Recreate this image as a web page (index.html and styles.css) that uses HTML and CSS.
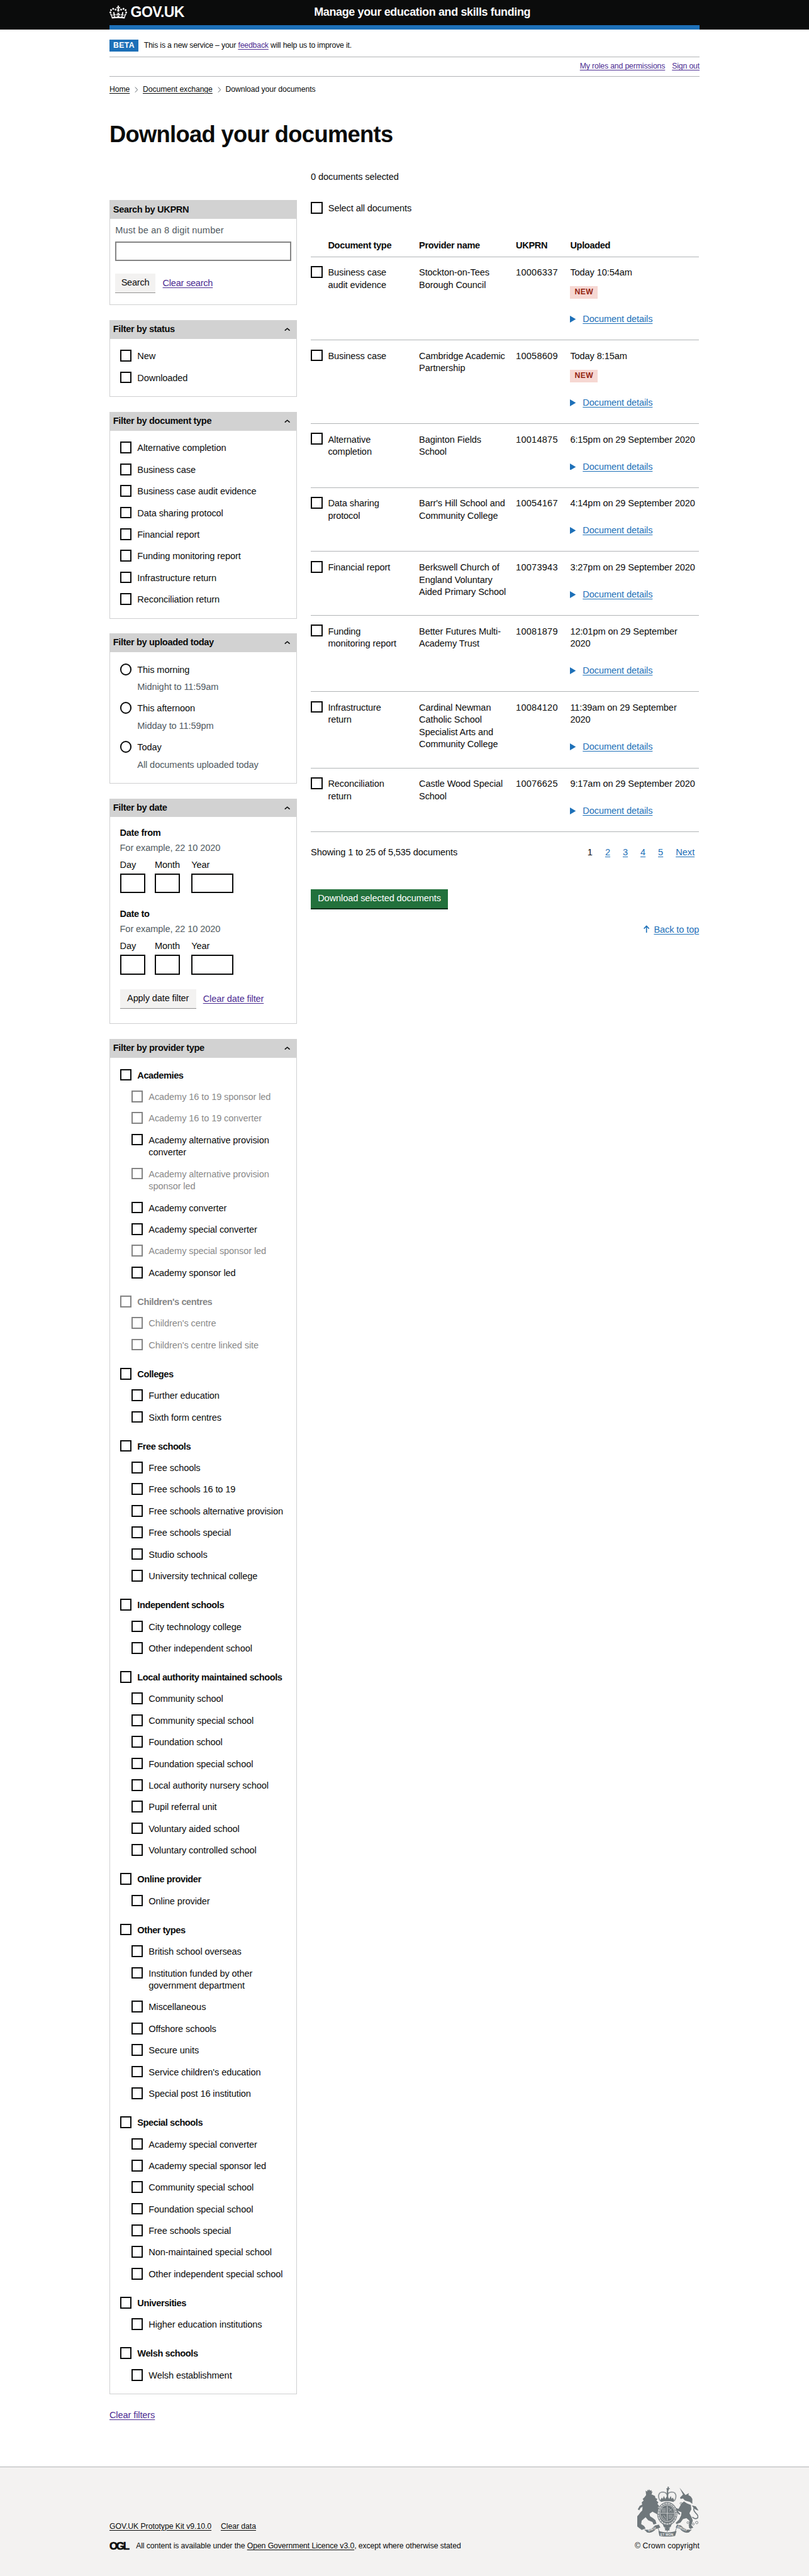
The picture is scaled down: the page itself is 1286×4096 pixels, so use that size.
FILE: index.html
```html
<!DOCTYPE html>
<html lang="en">
<head>
<meta charset="utf-8">
<title>Download your documents</title>
<link rel="stylesheet" href="styles.css">
</head>
<body>
<svg width="0" height="0" class="sprite" aria-hidden="true">
  <symbol id="up" viewBox="0 0 12 7"><path d="M1 6 6 1.6 11 6" fill="none" stroke="#0b0c0c" stroke-width="2"/></symbol>
  <symbol id="right" viewBox="0 0 7 12"><path d="M1 .8 6 6 1 11.2" fill="none" stroke="#505a5f" stroke-width="1.2"/></symbol>
  <symbol id="play" viewBox="0 0 12 14"><path d="M0 0 12 7 0 14z" fill="#1d70b8"/></symbol>
</svg>
<header class="header">
  <div class="container header-inner">
    <a class="logo">
      <svg class="crown" viewBox="0 0 132 97"><path fill="#fff" d="M25 30.2c3.5 1.5 7.7-.2 9.1-3.7 1.5-3.6-.2-7.8-3.9-9.2-3.6-1.4-7.6.3-9.1 3.9-1.4 3.5.3 7.5 3.9 9zM9 39.5c3.6 1.5 7.8-.2 9.2-3.7 1.5-3.6-.2-7.8-3.9-9.1-3.6-1.5-7.6.2-9.1 3.8-1.4 3.5.3 7.5 3.8 9zM4.4 57.2c3.5 1.5 7.7-.2 9.1-3.8 1.5-3.6-.2-7.7-3.9-9.1-3.5-1.5-7.6.3-9.1 3.8-1.4 3.5.3 7.6 3.9 9.1zm38.3-21.4c3.5 1.5 7.7-.2 9.1-3.8 1.5-3.6-.2-7.7-3.9-9.1-3.6-1.5-7.6.3-9.1 3.8-1.3 3.6.4 7.7 3.9 9.1zm64.4-5.6c-3.6 1.5-7.8-.2-9.1-3.7-1.5-3.6.2-7.8 3.8-9.2 3.6-1.4 7.7.3 9.2 3.9 1.3 3.5-.4 7.5-3.9 9zm15.9 9.3c-3.6 1.5-7.7-.2-9.1-3.7-1.5-3.6.2-7.8 3.7-9.1 3.6-1.5 7.7.2 9.2 3.8 1.5 3.5-.3 7.5-3.8 9zm4.7 17.7c-3.6 1.5-7.8-.2-9.2-3.8-1.5-3.6.2-7.7 3.9-9.1 3.6-1.5 7.7.3 9.2 3.8 1.3 3.5-.4 7.6-3.9 9.1zM89.3 35.8c-3.6 1.5-7.8-.2-9.2-3.8-1.4-3.6.2-7.7 3.9-9.1 3.6-1.5 7.7.3 9.2 3.8 1.4 3.6-.3 7.7-3.9 9.1zM69.7 17.7l8.9 4.7V9.3l-8.9 2.8c-.2-.3-.5-.6-.9-.9L72.4 0H59.6l3.5 11.2c-.3.3-.6.5-.9.9l-8.8-2.8v13.1l8.8-4.7c.3.3.6.7.9.9l-5 15.4v.1c-.2.8-.4 1.6-.4 2.4 0 4.1 3.1 7.5 7 8.1h.2c.3 0 .7.1 1 .1.4 0 .7 0 1-.1h.2c4-.6 7.1-4.1 7.1-8.1 0-.8-.1-1.7-.4-2.4V34l-5.1-15.4c.4-.2.7-.6 1-.9zM66 92.8c16.9 0 32.8 1.1 47.1 3.2 4-16.9 8.9-26.7 14-33.5l-9.6-3.4c1 4.9 1.1 7.2 0 10.2-1.5-1.4-3-4.3-4.2-8.7L108.6 76c2.8-2 5-3.2 7.5-3.3-4.4 9.4-10 11.9-13.6 11.2-4.3-.8-6.3-4.6-5.6-7.9 1-4.7 5.7-5.9 8-.5 4.3-8.7-3-11.4-7.6-8.8 7.1-7.2 7.9-13.5 2.1-21.1-8 6.1-8.1 12.3-4.5 20.8-4.7-5.4-12.1-2.5-9.5 6.2 3.4-5.2 7.9-2 7.2 3.1-.6 4.3-6.4 7.8-13.5 7.2-10.3-.9-10.9-8-11.2-13.8 2.5-.5 7.1 1.8 11 7.3L80.2 60c-4.1 4.4-8 5.3-12.3 5.4 1.4-4.4 8-11.6 8-11.6H55.5s6.4 7.2 7.9 11.6c-4.2-.1-8-1-12.3-5.4l1.4 16.4c3.9-5.5 8.5-7.7 10.9-7.3-.3 5.8-.9 12.8-11.1 13.8-7.2.6-12.9-2.9-13.5-7.2-.7-5 3.8-8.3 7.1-3.1 2.7-8.7-4.6-11.6-9.4-6.2 3.7-8.5 3.6-14.7-4.6-20.8-5.8 7.6-5 13.9 2.2 21.1-4.7-2.6-11.9.1-7.7 8.8 2.3-5.5 7.1-4.2 8.1.5.7 3.3-1.3 7.1-5.7 7.9-3.5.7-9-1.8-13.5-11.2 2.5.1 4.7 1.3 7.5 3.3l-4.7-15.4c-1.2 4.4-2.7 7.2-4.3 8.7-1.1-3-.9-5.3 0-10.2l-9.5 3.4c5 6.9 9.9 16.7 14 33.5 14.8-2.1 30.8-3.2 47.7-3.2z"/></svg>
      <span class="logotype">GOV.UK</span>
    </a>
    <span class="service">Manage your education and skills funding</span>
  </div>
</header>

<div class="container">
  <div class="phase small"><strong class="phase-tag">BETA</strong><span class="phase-text">This is a new service – your <a class="visited">feedback</a> will help us to improve it.</span></div>
  <nav class="account small"><a class="visited">My roles and permissions</a><a class="visited">Sign out</a></nav>
  <nav class="crumbs small"><a class="plain">Home</a><svg><use href="#right"/></svg><a class="plain">Document exchange</a><svg><use href="#right"/></svg><span>Download your documents</span></nav>
  <h1>Download your documents</h1>

  <main class="columns">
    <aside class="filters">
      <section class="panel">
        <h2>Search by UKPRN</h2>
        <div class="search">
          <div class="hint">Must be an 8 digit number</div>
          <div class="search-input"></div>
          <div class="actions"><span class="button-grey search-button">Search</span><a class="visited">Clear search</a></div>
        </div>
      </section>

      <section class="panel">
        <h2>Filter by status<svg><use href="#up"/></svg></h2>
        <div class="options">
          <label class="opt"><i></i><span>New</span></label>
          <label class="opt"><i></i><span>Downloaded</span></label>
        </div>
      </section>

      <section class="panel">
        <h2>Filter by document type<svg><use href="#up"/></svg></h2>
        <div class="options">
          <label class="opt"><i></i><span>Alternative completion</span></label>
          <label class="opt"><i></i><span>Business case</span></label>
          <label class="opt"><i></i><span>Business case audit evidence</span></label>
          <label class="opt"><i></i><span>Data sharing protocol</span></label>
          <label class="opt"><i></i><span>Financial report</span></label>
          <label class="opt"><i></i><span>Funding monitoring report</span></label>
          <label class="opt"><i></i><span>Infrastructure return</span></label>
          <label class="opt"><i></i><span>Reconciliation return</span></label>
        </div>
      </section>

      <section class="panel">
        <h2>Filter by uploaded today<svg><use href="#up"/></svg></h2>
        <div class="options radios">
          <label class="opt"><i></i><span>This morning</span><span class="hint">Midnight to 11:59am</span></label>
          <label class="opt"><i></i><span>This afternoon</span><span class="hint">Midday to 11:59pm</span></label>
          <label class="opt"><i></i><span>Today</span><span class="hint">All documents uploaded today</span></label>
        </div>
      </section>

      <section class="panel">
        <h2>Filter by date<svg><use href="#up"/></svg></h2>
        <div class="dates">
          <fieldset>
            <b>Date from</b>
            <div class="hint">For example, 22 10 2020</div>
            <div class="date-row"><label>Day<i></i></label><label>Month<i></i></label><label class="year">Year<i></i></label></div>
          </fieldset>
          <fieldset>
            <b>Date to</b>
            <div class="hint">For example, 22 10 2020</div>
            <div class="date-row"><label>Day<i></i></label><label>Month<i></i></label><label class="year">Year<i></i></label></div>
          </fieldset>
          <div class="actions"><span class="button-grey apply-button">Apply date filter</span><a class="visited">Clear date filter</a></div>
        </div>
      </section>

      <section class="panel">
        <h2>Filter by provider type<svg><use href="#up"/></svg></h2>
        <div class="options tree">
          <div class="group">
            <label class="opt head"><i></i><span>Academies</span></label>
            <label class="opt off"><i></i><span>Academy 16 to 19 sponsor led</span></label>
            <label class="opt off"><i></i><span>Academy 16 to 19 converter</span></label>
            <label class="opt"><i></i><span>Academy alternative provision<br>converter</span></label>
            <label class="opt off"><i></i><span>Academy alternative provision<br>sponsor led</span></label>
            <label class="opt"><i></i><span>Academy converter</span></label>
            <label class="opt"><i></i><span>Academy special converter</span></label>
            <label class="opt off"><i></i><span>Academy special sponsor led</span></label>
            <label class="opt"><i></i><span>Academy sponsor led</span></label>
          </div>
          <div class="group">
            <label class="opt head off"><i></i><span>Children's centres</span></label>
            <label class="opt off"><i></i><span>Children's centre</span></label>
            <label class="opt off"><i></i><span>Children's centre linked site</span></label>
          </div>
          <div class="group">
            <label class="opt head"><i></i><span>Colleges</span></label>
            <label class="opt"><i></i><span>Further education</span></label>
            <label class="opt"><i></i><span>Sixth form centres</span></label>
          </div>
          <div class="group">
            <label class="opt head"><i></i><span>Free schools</span></label>
            <label class="opt"><i></i><span>Free schools</span></label>
            <label class="opt"><i></i><span>Free schools 16 to 19</span></label>
            <label class="opt"><i></i><span>Free schools alternative provision</span></label>
            <label class="opt"><i></i><span>Free schools special</span></label>
            <label class="opt"><i></i><span>Studio schools</span></label>
            <label class="opt"><i></i><span>University technical college</span></label>
          </div>
          <div class="group">
            <label class="opt head"><i></i><span>Independent schools</span></label>
            <label class="opt"><i></i><span>City technology college</span></label>
            <label class="opt"><i></i><span>Other independent school</span></label>
          </div>
          <div class="group">
            <label class="opt head"><i></i><span>Local authority maintained schools</span></label>
            <label class="opt"><i></i><span>Community school</span></label>
            <label class="opt"><i></i><span>Community special school</span></label>
            <label class="opt"><i></i><span>Foundation school</span></label>
            <label class="opt"><i></i><span>Foundation special school</span></label>
            <label class="opt"><i></i><span>Local authority nursery school</span></label>
            <label class="opt"><i></i><span>Pupil referral unit</span></label>
            <label class="opt"><i></i><span>Voluntary aided school</span></label>
            <label class="opt"><i></i><span>Voluntary controlled school</span></label>
          </div>
          <div class="group">
            <label class="opt head"><i></i><span>Online provider</span></label>
            <label class="opt"><i></i><span>Online provider</span></label>
          </div>
          <div class="group">
            <label class="opt head"><i></i><span>Other types</span></label>
            <label class="opt"><i></i><span>British school overseas</span></label>
            <label class="opt"><i></i><span>Institution funded by other<br>government department</span></label>
            <label class="opt"><i></i><span>Miscellaneous</span></label>
            <label class="opt"><i></i><span>Offshore schools</span></label>
            <label class="opt"><i></i><span>Secure units</span></label>
            <label class="opt"><i></i><span>Service children's education</span></label>
            <label class="opt"><i></i><span>Special post 16 institution</span></label>
          </div>
          <div class="group">
            <label class="opt head"><i></i><span>Special schools</span></label>
            <label class="opt"><i></i><span>Academy special converter</span></label>
            <label class="opt"><i></i><span>Academy special sponsor led</span></label>
            <label class="opt"><i></i><span>Community special school</span></label>
            <label class="opt"><i></i><span>Foundation special school</span></label>
            <label class="opt"><i></i><span>Free schools special</span></label>
            <label class="opt"><i></i><span>Non-maintained special school</span></label>
            <label class="opt"><i></i><span>Other independent special school</span></label>
          </div>
          <div class="group">
            <label class="opt head"><i></i><span>Universities</span></label>
            <label class="opt"><i></i><span>Higher education institutions</span></label>
          </div>
          <div class="group">
            <label class="opt head"><i></i><span>Welsh schools</span></label>
            <label class="opt"><i></i><span>Welsh establishment</span></label>
          </div>
        </div>
      </section>
      <a class="visited clear-all">Clear filters</a>
    </aside>

    <div class="results">
      <div>0 documents selected</div>
      <label class="opt select-all"><i></i><span>Select all documents</span></label>

      <div class="table">
        <div class="row row-head"><span></span><b>Document type</b><b>Provider name</b><b>UKPRN</b><b>Uploaded</b></div>
        <div class="row"><i></i><span>Business case<br>audit evidence</span><span>Stockton-on-Tees<br>Borough Council</span><span class="num">10006337</span><div>Today 10:54am<strong class="tag">NEW</strong><div class="details"><svg><use href="#play"/></svg><a>Document details</a></div></div></div>
        <div class="row"><i></i><span>Business case</span><span>Cambridge Academic<br>Partnership</span><span class="num">10058609</span><div>Today 8:15am<strong class="tag">NEW</strong><div class="details"><svg><use href="#play"/></svg><a>Document details</a></div></div></div>
        <div class="row"><i></i><span>Alternative<br>completion</span><span>Baginton Fields<br>School</span><span class="num">10014875</span><div>6:15pm on 29 September 2020<div class="details"><svg><use href="#play"/></svg><a>Document details</a></div></div></div>
        <div class="row"><i></i><span>Data sharing<br>protocol</span><span>Barr's Hill School and<br>Community College</span><span class="num">10054167</span><div>4:14pm on 29 September 2020<div class="details"><svg><use href="#play"/></svg><a>Document details</a></div></div></div>
        <div class="row"><i></i><span>Financial report</span><span>Berkswell Church of<br>England Voluntary<br>Aided Primary School</span><span class="num">10073943</span><div>3:27pm on 29 September 2020<div class="details"><svg><use href="#play"/></svg><a>Document details</a></div></div></div>
        <div class="row"><i></i><span>Funding<br>monitoring report</span><span>Better Futures Multi-<br>Academy Trust</span><span class="num">10081879</span><div>12:01pm on 29 September<br>2020<div class="details"><svg><use href="#play"/></svg><a>Document details</a></div></div></div>
        <div class="row"><i></i><span>Infrastructure<br>return</span><span>Cardinal Newman<br>Catholic School<br>Specialist Arts and<br>Community College</span><span class="num">10084120</span><div>11:39am on 29 September<br>2020<div class="details"><svg><use href="#play"/></svg><a>Document details</a></div></div></div>
        <div class="row"><i></i><span>Reconciliation<br>return</span><span>Castle Wood Special<br>School</span><span class="num">10076625</span><div>9:17am on 29 September 2020<div class="details"><svg><use href="#play"/></svg><a>Document details</a></div></div></div>
      </div>

      <div class="paging">
        <span>Showing 1 to 25 of 5,535 documents</span>
        <nav><span>1</span><a>2</a><a>3</a><a>4</a><a>5</a><a>Next</a></nav>
      </div>
      <span class="button-green">Download selected documents</span>
      <div class="back"><svg viewBox="0 0 12 16"><path d="M6 16V2M.8 7.2 6 1.8l5.2 5.4" fill="none" stroke="#1d70b8" stroke-width="2"/></svg><a>Back to top</a></div>
    </div>
  </main>
</div>

<footer class="footer small">
  <div class="container footer-inner">
    <div>
      <div class="footer-links"><a class="plain">GOV.UK Prototype Kit v9.10.0</a><a class="plain">Clear data</a></div>
      <div class="licence"><b class="ogl">OGL</b><span>All content is available under the <a class="plain">Open Government Licence v3.0</a>, except where otherwise stated</span></div>
    </div>
    <div class="copyright">
      <svg class="crest" viewBox="0 0 125 102">
        <g fill="#6f777b">
          <!-- royal crown -->
          <path d="M60 3h2V1l-1-1h4l-1 1v2h2v2h-2v3h-4V5h-1z"/>
          <g fill="none" stroke="#6f777b" stroke-width="2.2" stroke-dasharray="2 .6"><path d="M47 29C40 20 44 10 52 11c6 0 9 4 9 8M75 29c7-9 3-19-5-18-6 0-9 4-9 8"/></g>
          <path d="M60 8h3v14h-3zM47 27l3-5 2 3 2-6 3 6 4-7 4 7 3-6 2 6 2-3 3 5-1 4c-8-2-18-2-26 0z"/>
          <!-- lion -->
          <path d="M17 8l3 2 1-4 2 2 1-3 2 3 3-1v4l2-2-2 7-11 1zM18 17l12-1 6 3 1 4 4 2-2 3 4 4-2 3 4 5-3 2 3 6 4 3-1 7-6-4 2 4-7-4-6-3-6 4 1 5 6 4 5 4 2 7-6 2-2-5-9-4-5-6-8 7-1 7 6 4 3 5-8 3-10-8-3-11 4-9 10-11 1-9-2-8 4-4-2-3 4-4z"/>
          <path d="M1 46l4-7 8-4-2 6-4 2-3 5z"/>
          <path d="M10 37c9 1 4 11-2 15-4 4-5 9 2 10" fill="none" stroke="#6f777b" stroke-width="2"/>
          <!-- unicorn -->
          <path d="M86 2l12 15 7-4-1 4 5 3 3 5v10l-5-4-10-3-4-4-5 1-1-3 6-6zM90 34l5-4 6 4 8 3 1 9-4 8 4 7 3 8-3 9 4 5-6 3-3-3 1-14-6-5-7 2-5 7-8 3-2-2 7-7 4-8 1-7-8-3 6 7-3 1-8-9-3 2-2-3 5-4 7 2z"/>
          <path d="M112 62c7 6 13 2 11-3-2-6-10-7-8-15" fill="none" stroke="#6f777b" stroke-width="2"/>
          <path d="M111 38l8 2 6 9-5-2-5-3z"/>
          <g fill="none" stroke="#6f777b" stroke-width="1.1"><circle cx="89" cy="34" r="2"/><circle cx="103" cy="73" r="2"/><circle cx="107" cy="78" r="2"/><circle cx="114" cy="76" r="2"/><circle cx="121" cy="73" r="2.5"/></g>
          <!-- garter and shield -->
          <ellipse cx="61" cy="55" rx="20.500" ry="24"/>
          <path d="M51 74h20l-3 8-7 3-7-3z"/>
          <!-- motto ribbon -->
          <path d="M14 87c10 2 16-2 22-8l8-2 3 6-9 3c-5 6-11 9-18 7zM111 87c-10 2-16-2-22-8l-8-2-3 6 9 3c5 6 11 9 18 7zM43 90c12 4 25 4 37 0l-3 10c-11 2-21 2-32 0z"/>
          <path d="M42 84l3 7M80 84l-3 7" stroke="#6f777b" stroke-width="1.200"/>
          <path d="M61 80l3 4 3-1-2 4 1 2h-4l-1 4-1-4h-4l1-2-2-4 3 1z"/>
        </g>
        <ellipse cx="61" cy="54" rx="15" ry="17" fill="none" stroke="#f3f2f1" stroke-width="1"/>
        <ellipse cx="61" cy="55" rx="18" ry="21" fill="none" stroke="#f3f2f1" stroke-width="3" stroke-dasharray="1 1.300 2 1.100"/>
        <path d="M61 39v30M47 54h28" stroke="#c3c6c7" stroke-width="1.500"/>
        <path d="M50 45h8M50 48h8M50 51h8M64 44l7 6M65 50l5-5M50 59c2 6 5 8 8 8M54 58l4 6M64 58h8M64 61h8M64 64h6" stroke="#d9dbdb" stroke-width="1.200" stroke-dasharray="2 .8" fill="none"/>
        <g fill="#f3f2f1" class="motto"><text x="23" y="91.500" transform="rotate(-22 23 91)">DIEU</text><text x="47" y="99.300">ET MON</text><text x="81" y="83" transform="rotate(24 81 83)">DROIT</text></g>
      </svg>
      <span>© Crown copyright</span>
    </div>
  </div>
</footer>
</body>
</html>
```
FILE: styles.css
```css
* { box-sizing: border-box; }
html { font-size: 7.8176px; }
body {
  margin: 0;
  min-height: 100vh;
  display: flex;
  flex-direction: column;
  background: #fff;
  color: #0b0c0c;
  font-family: "Liberation Sans", Arial, sans-serif;
  font-size: 1.87rem;
  line-height: 2.5rem;
  letter-spacing: -0.008em;
  white-space: nowrap;
}
b, strong, h1, h2 { letter-spacing: -0.025em; }
i { font-style: normal; }
svg { display: block; }
.sprite { position: absolute; }
.container { width: 120rem; margin: 0 auto; }
.small { font-size: 1.57rem; line-height: 2rem; letter-spacing: -0.005em; }

a { color: #1d70b8; text-decoration: underline; text-decoration-thickness: 1px; text-underline-offset: 0.2rem; }
a.visited { color: #4c2c92; }
a.plain { color: #0b0c0c; }

/* Header */
.header { background: #0b0c0c; color: #fff; }
.header-inner {
  height: 6rem;
  border-bottom: 1rem solid #1d70b8;
  display: grid;
  grid-template-columns: 41.6rem 1fr;
  align-items: center;
}
.logo { display: flex; align-items: center; color: #fff; text-decoration: none; gap: 0.7rem; }
.crown { width: 3.6rem; height: 2.65rem; margin-bottom: 0.2rem; }
.logotype { font-size: 2.95rem; font-weight: bold; letter-spacing: -0.025em; line-height: 5rem; }
.service { font-size: 2.3rem; font-weight: bold; letter-spacing: -0.02em; }

/* Phase banner, account links, breadcrumbs */
.phase { display: flex; align-items: center; padding: 2rem 0 1rem; border-bottom: 1px solid #b1b4b6; letter-spacing: -0.014em; }
.phase-tag { width: 5.9rem; height: 2.5rem; line-height: 2.5rem; background: #1d70b8; color: #fff; text-align: center; letter-spacing: 0.03em; margin-right: 1.1rem; }
.phase-text { padding-top: 0.1rem; }
.account { display: flex; justify-content: flex-end; align-items: center; gap: 1.4rem; height: 4rem; border-bottom: 1px solid #b1b4b6; letter-spacing: -0.012em; }
.crumbs { display: flex; align-items: center; padding-top: 1.6rem; letter-spacing: -0.008em; }
.crumbs svg { width: 0.7rem; height: 1.2rem; margin: 0 0.95rem 0 1rem; }

h1 { margin: 5.55rem 0 5.05rem; font-size: 4.65rem; line-height: 5rem; letter-spacing: -0.019em; }

.columns { display: grid; grid-template-columns: 38.1rem 78.95rem; column-gap: 2.85rem; align-items: start; }

/* Filters */
.filters { padding-top: 5.92rem; padding-bottom: 9.1rem; }
.panel { border: 1px solid #cfd0d1; margin-bottom: 3.04rem; }
.panel h2 {
  display: flex;
  justify-content: space-between;
  align-items: center;
  height: 3.8rem;
  margin: -1px -1px 0;
  padding: 0 1.3rem 0 0.75rem;
  background: #d2d2d2;
  font-size: 1.87rem;
}
.panel h2 svg { width: 1.2rem; height: 0.7rem; }
.hint { color: #505a5f; }
.search { padding: 1.1rem 1.05rem 2.35rem; }
.search .hint { letter-spacing: 0.01em; }
.search-input { height: 4rem; margin: 1rem 0 2.5rem; border: 2px solid #858585; }
.actions { display: flex; align-items: center; gap: 1.5rem; letter-spacing: -0.018em; }
.dates .actions { gap: 1.4rem; letter-spacing: -0.01em; }
.button-grey { height: 3.95rem; line-height: 3.8rem; background: #f3f2f1; border-bottom: 1.5px solid #929191; text-align: center; }
.search-button { width: 8.15rem; }
.apply-button { width: 15.5rem; }

.options { padding: 2.27rem 2rem 0.65rem; }
.opt { display: grid; grid-template-columns: 2.4rem auto; column-gap: 1.15rem; justify-content: start; margin-bottom: 1.9rem; }
.opt i, .row > i { width: 2.4rem; height: 2.4rem; border: 2px solid #0b0c0c; background: #fff; }
.opt span { position: relative; top: 0.13rem; }
.opt.off { opacity: 0.5; }
.radios .opt { margin-bottom: 1.86rem; }
.radios i { border-radius: 50%; }
.radios .hint { grid-column: 2; margin-top: 1.03rem; }
.tree .opt { margin-left: 2.3rem; }
.tree .head { margin-left: 0; font-weight: bold; letter-spacing: -0.03em; }
.group + .group { padding-top: 1.5rem; }

.dates { padding: 1.99rem 2rem 2.95rem; }
fieldset { border: 0; margin: 0 0 3.05rem; padding: 0; min-width: 0; }
fieldset b { display: block; }
fieldset .hint { margin-top: 0.53rem; }
.date-row { display: grid; grid-template-columns: 5.1rem 5.1rem 8.5rem; column-gap: 2rem; margin-top: 1.03rem; }
.date-row label { line-height: 2.5rem; }
.date-row .year { margin-left: 0.35rem; }
.date-row i { display: block; height: 4.03rem; width: 5.15rem; margin-top: 0.4rem; border: 2px solid #0b0c0c; }
.date-row .year i { width: 8.5rem; }
.clear-all { display: block; width: max-content; }

/* Results */
.select-all { margin: 3.75rem 0 0; }
.table { margin-top: 5.13rem; }
.row {
  display: grid;
  grid-template-columns: 3.5rem 18.5rem 19.7rem 11.05rem 1fr;
  padding: 1.98rem 0 2.9rem;
  border-bottom: 1px solid #b1b4b6;
}
.row > i { margin-top: -0.15rem; }
.row-head { padding: 0 0 0.95rem; }
.num { letter-spacing: 0.015em; }
.details { display: flex; align-items: center; margin-top: 3rem; }
.details svg { width: 1.2rem; height: 1.4rem; margin-right: 1.35rem; margin-bottom: 0.1rem; }
.tag { display: block; width: 5.6rem; height: 2.5rem; margin: 1.48rem 0 0; background: #f6d7d2; color: #942514; font-size: 1.56rem; line-height: 2.5rem; text-align: center; letter-spacing: 0.03em; }
.paging { display: flex; justify-content: space-between; margin-top: 2.95rem; letter-spacing: -0.008em; }
.paging nav { display: flex; gap: 2.55rem; padding-right: 0.9rem; letter-spacing: 0; }
.button-green { display: block; width: 27.9rem; height: 4.05rem; margin-top: 6.15rem; line-height: 3.8rem; background: #22713c; border-bottom: 2px solid #002d18; color: #fff; text-align: center; }
.back { display: flex; justify-content: flex-end; align-items: center; margin-top: 2.95rem; gap: 0.95rem; }
.back svg { width: 1.2rem; height: 1.6rem; margin-bottom: 0.3rem; }

/* Footer */
.footer { flex: 1; background: #f3f2f1; border-top: 1px solid #b1b4b6; }
.footer-inner { display: flex; justify-content: space-between; align-items: flex-end; padding-top: 4rem; }
.footer-links { display: flex; gap: 1.9rem; margin-bottom: 2rem; }
.licence { display: flex; align-items: center; letter-spacing: -0.008em; }
.ogl { width: 5.4rem; font-size: 2.15rem; letter-spacing: -0.13em; -webkit-text-stroke: 0.08rem #0b0c0c; }
.copyright { display: flex; flex-direction: column; align-items: flex-end; letter-spacing: 0.01em; }
.crest { width: 12.5rem; height: 10.2rem; margin: 0 0.2rem 0.95rem 0; }
.motto { font: bold 6.5px "Liberation Sans", Arial, sans-serif; letter-spacing: 0.2px; }
```
